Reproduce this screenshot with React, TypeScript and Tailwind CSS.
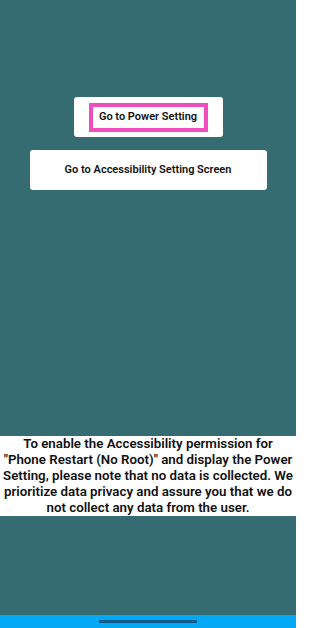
const App = () => {
  return (
    <div
      className="w-[296px] h-[628px] bg-[#356c71] flex flex-col overflow-hidden"
      style={{ fontFamily: "Roboto, 'Liberation Sans', sans-serif" }}
    >
      <div className="flex flex-col items-center pt-[97px] gap-[13px]">
        <button className="w-[149px] h-[40px] bg-white rounded-[3px] flex items-center justify-center">
          <span className="w-[119px] h-[29px] border-[4px] border-[#f04dbd] flex items-center justify-center text-[11px] font-semibold text-[#111]">
            Go to Power Setting
          </span>
        </button>
        <button className="w-[237px] h-[40px] bg-white rounded-[3px] flex items-center justify-center text-[11px] font-semibold text-[#111]">
          Go to Accessibility Setting Screen
        </button>
      </div>

      <p className="mt-[246px] bg-white text-center text-[13.3px] leading-[16px] font-semibold text-[#111] whitespace-nowrap">
        To enable the Accessibility permission for
        <br />
        "Phone Restart (No Root)" and display the Power
        <br />
        Setting, please note that no data is collected. We
        <br />
        prioritize data privacy and assure you that we do
        <br />
        not collect any data from the user.
      </p>

      <div className="flex-1" />

      <div className="h-[13px] bg-[#03a9f4] flex items-center justify-center">
        <div className="w-[98px] h-[3px] bg-[#0a5c8c]" />
      </div>
    </div>
  );
};

export default App;
